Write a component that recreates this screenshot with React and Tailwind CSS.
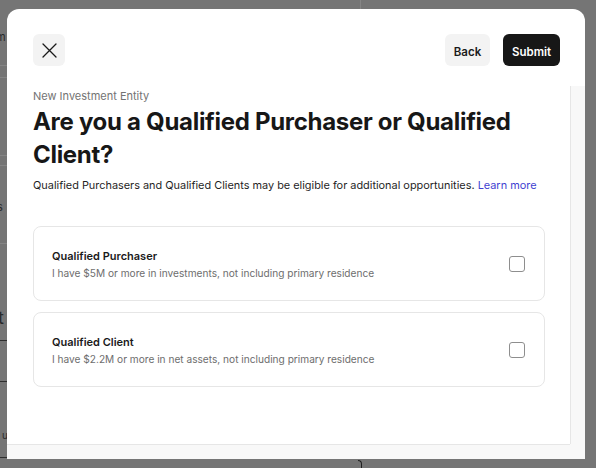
import React from 'react';

const options = [
  {
    title: 'Qualified Purchaser',
    detail: 'I have $5M or more in investments, not including primary residence',
  },
  {
    title: 'Qualified Client',
    detail: 'I have $2.2M or more in net assets, not including primary residence',
  },
];

function OptionCard({ title, detail }) {
  return (
    <label className="h-[75px] flex items-center justify-between rounded-[8px] border border-[#e6e6e6] pl-[18px] pr-[19px]">
      <div className="flex flex-col gap-[2px]">
        <span className="text-[11px] leading-[16px] font-semibold text-[#1a1a1a]">{title}</span>
        <span className="text-[10.15px] leading-[14px] text-[#6e6e6e]">{detail}</span>
      </div>
      <span className="w-[16px] h-[16px] rounded-[3px] border border-[#8e8e8e] bg-white" />
    </label>
  );
}

export default function App() {
  return (
    <div className="relative w-[596px] h-[468px] overflow-hidden bg-[#757575] font-['Inter',sans-serif]">
      {/* Page behind the overlay, mostly hidden */}
      <div className="absolute left-0 top-[30px] text-[11px] leading-[14px] text-[#2a2a2a] -translate-x-[4px]">m</div>
      <div className="absolute left-0 top-[65px] w-[7px] h-px bg-[#858585]" />
      <div className="absolute left-0 top-[77px] w-[7px] h-px bg-[#858585]" />
      <div className="absolute left-0 top-[155px] w-[7px] h-px bg-[#858585]" />
      <div className="absolute left-0 top-[165px] w-[7px] h-px bg-[#858585]" />
      <div className="absolute left-0 top-[200px] text-[11px] leading-[14px] text-[#2a2a2a] -translate-x-[3px]">s</div>
      <div className="absolute left-0 top-[243px] w-[7px] h-px bg-[#858585]" />
      <div className="absolute left-0 top-[307px] text-[18px] leading-[22px] text-[#2a2a2a] -translate-x-[2px]">t</div>
      <div className="absolute left-0 top-[340px] w-[7px] h-px bg-[#2e2e2e]" />
      <div className="absolute left-0 top-[381px] w-[7px] h-px bg-[#2e2e2e]" />
      <div className="absolute left-0 top-[428px] text-[10px] leading-[14px] text-[#2a2a2a] translate-x-[2px]">u</div>
      <div className="absolute left-0 top-[457px] w-[7px] h-px bg-[#2e2e2e]" />
      <div className="absolute left-[360px] top-0 w-px h-[9px] bg-[#858585]" />
      <div className="absolute left-[358px] top-[460px] w-[4px] h-[10px] rounded-tr-[4px] border-t border-r border-[#1f1f1f]" />

      {/* Modal */}
      <div className="absolute left-[7px] top-[9px] w-[578px] h-[450px] bg-white rounded-t-[12px] flex flex-col overflow-hidden">
        <div className="h-[77px] shrink-0 flex items-start justify-between pt-[25px] pl-[26px] pr-[25px]">
          <button className="w-[32px] h-[32px] rounded-[6px] bg-[#f3f3f3] flex items-center justify-center">
            <svg width="15" height="15" viewBox="0 0 15 15" fill="none" stroke="#1a1a1a" strokeWidth="1.3" strokeLinecap="round">
              <path d="M1 1L14 14M14 1L1 14" />
            </svg>
          </button>
          <div className="flex items-center gap-[13px]">
            <button className="w-[45px] h-[32px] pt-[3px] rounded-[6px] bg-[#f3f3f3] text-[11.5px] leading-[16px] font-semibold text-[#1a1a1a]">
              Back
            </button>
            <button className="w-[57px] h-[32px] pt-[3px] rounded-[6px] bg-[#171717] text-[11.5px] leading-[16px] font-semibold text-white">
              Submit
            </button>
          </div>
        </div>

        <div className="flex-1 flex min-h-0">
          <div className="flex-1 pl-[26px] pr-[25px] pt-[3px]">
            <p className="text-[11px] leading-[14px] text-[#737373]">New Investment Entity</p>
            <h1 className="mt-[2px] text-[24px] leading-[33px] font-bold tracking-[-0.3px] text-[#171717]">
              Are you a Qualified Purchaser or Qualified Client?
            </h1>
            <p className="mt-[6px] text-[10.9px] leading-[16px] text-[#1f1f1f]">
              Qualified Purchasers and Qualified Clients may be eligible for additional opportunities.{' '}
              <a className="text-[#3f3fd1]">Learn more</a>
            </p>
            <div className="mt-[33px] flex flex-col gap-[11px]">
              {options.map((o) => (
                <OptionCard key={o.title} {...o} />
              ))}
            </div>
          </div>
          <div className="w-[15px] shrink-0 bg-[#f8f8f8] border-l border-[#e6e6e6]" />
        </div>

        <div className="h-[15px] shrink-0 flex">
          <div className="flex-1 bg-[#f8f8f8] border-t border-[#e6e6e6]" />
          <div className="w-[15px] bg-[#f8f8f8]" />
        </div>
      </div>
    </div>
  );
}
